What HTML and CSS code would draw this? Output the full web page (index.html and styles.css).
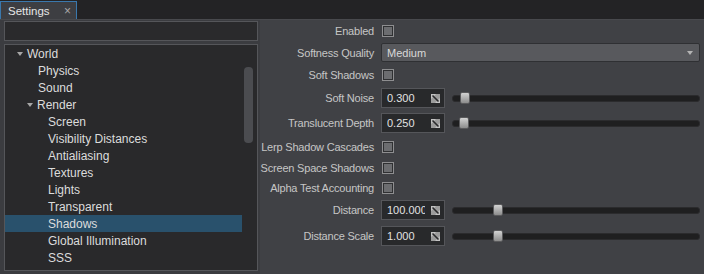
FILE: index.html
```html
<!DOCTYPE html>
<html>
<head>
    <meta charset="UTF-8">
    <title>Settings</title>
    <link rel="stylesheet" href="styles.css">
</head>
<body>
    <div class="tabbar">
        <div class="tab">
            <span class="tab-title">Settings</span>
            <span class="tab-close">&times;</span>
        </div>
    </div>

    <div class="window">
        <div class="sidebar">
            <div class="search"></div>
            <div class="tree">
                <div class="tree-rows">
                    <div class="tree-row lvl0"><span class="twisty"></span>World</div>
                    <div class="tree-row lvl1">Physics</div>
                    <div class="tree-row lvl1">Sound</div>
                    <div class="tree-row lvl1"><span class="twisty"></span>Render</div>
                    <div class="tree-row lvl2">Screen</div>
                    <div class="tree-row lvl2">Visibility Distances</div>
                    <div class="tree-row lvl2">Antialiasing</div>
                    <div class="tree-row lvl2">Textures</div>
                    <div class="tree-row lvl2">Lights</div>
                    <div class="tree-row lvl2">Transparent</div>
                    <div class="tree-row lvl2 selected">Shadows</div>
                    <div class="tree-row lvl2">Global Illumination</div>
                    <div class="tree-row lvl2">SSS</div>
                </div>
                <div class="scrollbar"><div class="scroll-handle"></div></div>
            </div>
        </div>

        <div class="props">
            <div class="prop h21">
                <label>Enabled</label>
                <span class="check"></span>
            </div>
            <div class="prop h23">
                <label>Softness Quality</label>
                <div class="combo">
                    <span>Medium</span>
                    <span class="combo-arrow"></span>
                </div>
            </div>
            <div class="prop h22">
                <label>Soft Shadows</label>
                <span class="check"></span>
            </div>
            <div class="prop h24">
                <label>Soft Noise</label>
                <div class="spin">
                    <span class="spin-value">0.300</span>
                    <svg class="spin-icon" width="9" height="9" viewBox="0 0 9 9">
                        <rect x="0" y="0" width="9" height="9" fill="#9c9c9c"/>
                        <path d="M0 0 L5 0 L0 5 Z M9 9 L4 9 L9 4 Z" fill="#c4c4c4"/>
                        <path d="M1.5 1.5 L7.5 7.5" stroke="#2a2a2c" stroke-width="1.6"/>
                    </svg>
                </div>
                <div class="slider"><span class="handle" style="left: 7px"></span></div>
            </div>
            <div class="prop h26">
                <label>Translucent Depth</label>
                <div class="spin">
                    <span class="spin-value">0.250</span>
                    <svg class="spin-icon" width="9" height="9" viewBox="0 0 9 9">
                        <rect x="0" y="0" width="9" height="9" fill="#9c9c9c"/>
                        <path d="M0 0 L5 0 L0 5 Z M9 9 L4 9 L9 4 Z" fill="#c4c4c4"/>
                        <path d="M1.5 1.5 L7.5 7.5" stroke="#2a2a2c" stroke-width="1.6"/>
                    </svg>
                </div>
                <div class="slider"><span class="handle" style="left: 6px"></span></div>
            </div>
            <div class="prop h22">
                <label>Lerp Shadow Cascades</label>
                <span class="check"></span>
            </div>
            <div class="prop h20">
                <label>Screen Space Shadows</label>
                <span class="check"></span>
            </div>
            <div class="prop h20">
                <label>Alpha Test Accounting</label>
                <span class="check"></span>
            </div>
            <div class="prop h24">
                <label>Distance</label>
                <div class="spin">
                    <span class="spin-value">100.000</span>
                    <svg class="spin-icon" width="9" height="9" viewBox="0 0 9 9">
                        <rect x="0" y="0" width="9" height="9" fill="#9c9c9c"/>
                        <path d="M0 0 L5 0 L0 5 Z M9 9 L4 9 L9 4 Z" fill="#c4c4c4"/>
                        <path d="M1.5 1.5 L7.5 7.5" stroke="#2a2a2c" stroke-width="1.6"/>
                    </svg>
                </div>
                <div class="slider"><span class="handle" style="left: 40px"></span></div>
            </div>
            <div class="prop h28">
                <label>Distance Scale</label>
                <div class="spin">
                    <span class="spin-value">1.000</span>
                    <svg class="spin-icon" width="9" height="9" viewBox="0 0 9 9">
                        <rect x="0" y="0" width="9" height="9" fill="#9c9c9c"/>
                        <path d="M0 0 L5 0 L0 5 Z M9 9 L4 9 L9 4 Z" fill="#c4c4c4"/>
                        <path d="M1.5 1.5 L7.5 7.5" stroke="#2a2a2c" stroke-width="1.6"/>
                    </svg>
                </div>
                <div class="slider"><span class="handle" style="left: 40px"></span></div>
            </div>
        </div>
    </div>
</body>
</html>
```

FILE: styles.css
```css
body {
    margin: 0;
    width: 704px;
    height: 274px;
    overflow: hidden;
    background: #404145;
    font-family: "Liberation Sans", Arial, sans-serif;
    color: #c8c8c8;
}

.tabbar {
    height: 18px;
    padding-top: 1px;
    background: #232325;
    border-bottom: 1px solid #48494d;
    display: flex;
}

.tab {
    width: 77px;
    height: 18px;
    box-sizing: border-box;
    background: #3d3e42;
    border: 1px solid #3a78ad;
    border-bottom: none;
    display: flex;
    align-items: center;
    justify-content: space-between;
    padding: 0 5px 0 7px;
    font-size: 11.5px;
    color: #e6e6e6;
}

.tab-close {
    color: #a8a8a8;
    font-size: 12px;
}

.window {
    display: flex;
    height: 254px;
}

.sidebar {
    width: 260px;
    background: #3b3c40;
    padding: 1px 2px 0 4px;
    box-sizing: border-box;
    display: flex;
    flex-direction: column;
    gap: 3px;
}

.search {
    height: 20px;
    background: #2a2a2c;
    border: 1px solid #55565a;
    box-sizing: border-box;
}

.tree {
    height: 227px;
    background: #29292b;
    border: 1px solid #55565a;
    box-sizing: border-box;
    display: flex;
    position: relative;
}

.tree-rows {
    flex: 1;
    margin-right: 15px;
}

.tree-row {
    height: 17px;
    line-height: 19px;
    font-size: 12px;
    color: #dcdcdc;
    white-space: nowrap;
}

.tree-row.lvl0 { padding-left: 23px; }
.tree-row.lvl1 { padding-left: 33px; }
.tree-row.lvl2 { padding-left: 43px; }

.tree-row.selected {
    background: #29516c;
}

.twisty {
    display: inline-block;
    width: 0;
    height: 0;
    border-left: 3.5px solid transparent;
    border-right: 3.5px solid transparent;
    border-top: 4px solid #a6a6a6;
    margin-left: -11px;
    margin-right: 4px;
    vertical-align: middle;
    position: relative;
    top: -1px;
}

.scrollbar {
    position: absolute;
    top: 22px;
    right: 4px;
    width: 9px;
}

.scroll-handle {
    height: 76px;
    background: #4b4c50;
    border-radius: 4px;
}

.props {
    flex: 1;
    padding-right: 4px;
    display: flex;
    flex-direction: column;
}

.prop {
    display: flex;
    align-items: center;
    gap: 7px;
}

.h20 { height: 20px; }
.h21 { height: 21px; }
.h22 { height: 22px; }
.h23 { height: 23px; }
.h24 { height: 24px; }
.h26 { height: 26px; }
.h28 { height: 28px; }

.prop label {
    width: 114px;
    flex: none;
    text-align: right;
    font-size: 11px;
    color: #c6c6c6;
    white-space: nowrap;
    letter-spacing: -0.2px;
}

.check {
    width: 12px;
    height: 12px;
    margin-left: 1px;
    box-sizing: border-box;
    border: 1px solid #8e8e90;
    background: #6c6d70;
    box-shadow: inset 0 0 0 1px #2f3032;
}

.combo {
    flex: 1;
    height: 19px;
    box-sizing: border-box;
    background: #58595d;
    border: 1px solid #2f3033;
    border-radius: 2px;
    display: flex;
    align-items: center;
    justify-content: space-between;
    padding: 0 6px 0 5px;
    font-size: 11px;
    color: #d8d8d8;
}

.combo-arrow {
    width: 0;
    height: 0;
    border-left: 3.5px solid transparent;
    border-right: 3.5px solid transparent;
    border-top: 4px solid #b4b4b4;
}

.spin {
    width: 64px;
    height: 20px;
    flex: none;
    box-sizing: border-box;
    background: #28292b;
    border: 1px solid #55565a;
    display: flex;
    align-items: center;
    padding-left: 5px;
    padding-right: 4px;
    gap: 6px;
}

.spin-value {
    flex: 1;
    overflow: hidden;
    white-space: nowrap;
    font-size: 11px;
    color: #e2e2e2;
}

.spin-icon {
    flex: none;
}

.slider {
    flex: 1;
    height: 5px;
    background: #1f1f20;
    border: 1px solid #2b2b2d;
    border-radius: 3px;
    position: relative;
}

.handle {
    position: absolute;
    top: -4px;
    width: 10px;
    height: 12px;
    box-sizing: border-box;
    border: 1px solid #5a5a5c;
    border-radius: 2px;
    background: linear-gradient(#d2d2d2, #8c8c8c);
}
```
